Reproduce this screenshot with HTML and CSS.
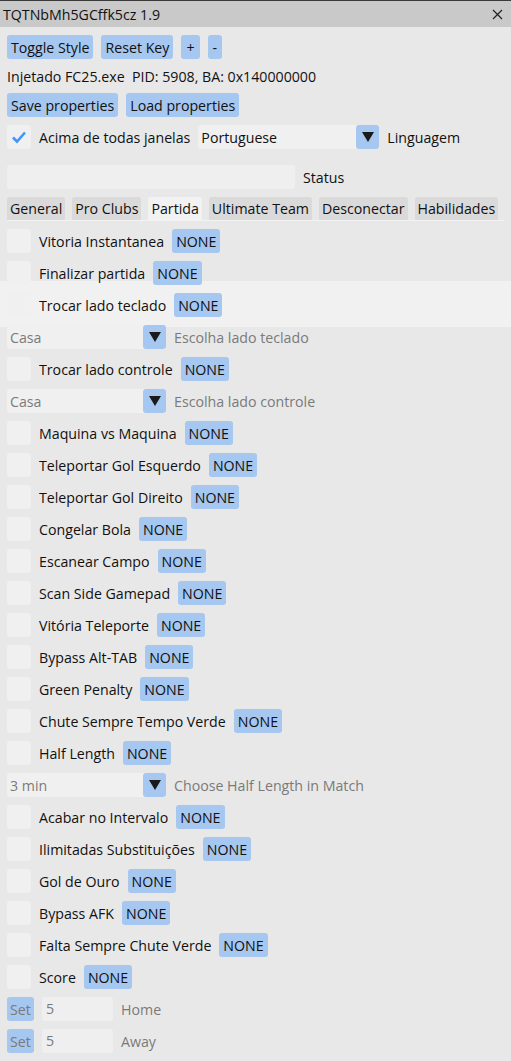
FILE: index.html
```html
<!DOCTYPE html>
<html lang="pt">
<head>
  <meta charset="UTF-8" />
  <title>TQTNbMh5GCffk5cz 1.9</title>
  <link rel="stylesheet" href="styles.css">
</head>
<body>
  <div class="window">
    <div class="titlebar">
      <span>TQTNbMh5GCffk5cz 1.9</span>
      <svg class="close" width="11" height="11" viewBox="0 0 11 11"><path d="M1 1 L10 10 M10 1 L1 10" stroke="#222" stroke-width="1.2" fill="none"/></svg>
    </div>

    <div class="content">
      <div class="row">
        <button>Toggle Style</button>
        <button>Reset Key</button>
        <button class="small">+</button>
        <button class="small">-</button>
      </div>
      <div class="row text">Injetado FC25.exe&nbsp; PID: 5908, BA: 0x140000000</div>
      <div class="row">
        <button>Save properties</button>
        <button>Load properties</button>
      </div>
      <div class="row">
        <span class="check"><svg width="24" height="24" viewBox="0 0 24 24"><path d="M6 12.5 L10 16.5 L18 7.5" stroke="#4296fa" stroke-width="2.6" fill="none" stroke-linejoin="miter"/></svg></span>
        <span>Acima de todas janelas</span>
        <div class="combo lang"><span>Portuguese</span><span class="arrow"><svg width="12" height="10" viewBox="0 0 12 10"><path d="M0 0 H12 L6 10 Z" fill="#1a1a1a"/></svg></span></div>
        <span>Linguagem</span>
      </div>
      <div class="row gap-top">
        <div class="input status-box"></div>
        <span>Status</span>
      </div>

      <div class="tabs">
        <span class="tab">General</span>
        <span class="tab">Pro Clubs</span>
        <span class="tab active">Partida</span>
        <span class="tab">Ultimate Team</span>
        <span class="tab">Desconectar</span>
        <span class="tab">Habilidades</span>
      </div>

      <div class="list">
        <div class="ghost"></div>
        <div class="row"><span class="check"></span><span>Vitoria Instantanea</span><button>NONE</button></div>
        <div class="row"><span class="check"></span><span>Finalizar partida</span><button>NONE</button></div>
        <div class="row"><span class="check"></span><span>Trocar lado teclado</span><button>NONE</button></div>
        <div class="row">
          <div class="combo"><span class="muted">Casa</span><span class="arrow"><svg width="12" height="10" viewBox="0 0 12 10"><path d="M0 0 H12 L6 10 Z" fill="#1a1a1a"/></svg></span></div>
          <span class="muted">Escolha lado teclado</span>
        </div>
        <div class="row"><span class="check"></span><span>Trocar lado controle</span><button>NONE</button></div>
        <div class="row">
          <div class="combo"><span class="muted">Casa</span><span class="arrow"><svg width="12" height="10" viewBox="0 0 12 10"><path d="M0 0 H12 L6 10 Z" fill="#1a1a1a"/></svg></span></div>
          <span class="muted">Escolha lado controle</span>
        </div>
        <div class="row"><span class="check"></span><span>Maquina vs Maquina</span><button>NONE</button></div>
        <div class="row"><span class="check"></span><span>Teleportar Gol Esquerdo</span><button>NONE</button></div>
        <div class="row"><span class="check"></span><span>Teleportar Gol Direito</span><button>NONE</button></div>
        <div class="row"><span class="check"></span><span>Congelar Bola</span><button>NONE</button></div>
        <div class="row"><span class="check"></span><span>Escanear Campo</span><button>NONE</button></div>
        <div class="row"><span class="check"></span><span>Scan Side Gamepad</span><button>NONE</button></div>
        <div class="row"><span class="check"></span><span>Vitória Teleporte</span><button>NONE</button></div>
        <div class="row"><span class="check"></span><span>Bypass Alt-TAB</span><button>NONE</button></div>
        <div class="row"><span class="check"></span><span>Green Penalty</span><button>NONE</button></div>
        <div class="row"><span class="check"></span><span>Chute Sempre Tempo Verde</span><button>NONE</button></div>
        <div class="row"><span class="check"></span><span>Half Length</span><button>NONE</button></div>
        <div class="row">
          <div class="combo"><span class="muted">3 min</span><span class="arrow"><svg width="12" height="10" viewBox="0 0 12 10"><path d="M0 0 H12 L6 10 Z" fill="#1a1a1a"/></svg></span></div>
          <span class="muted">Choose Half Length in Match</span>
        </div>
        <div class="row"><span class="check"></span><span>Acabar no Intervalo</span><button>NONE</button></div>
        <div class="row"><span class="check"></span><span>Ilimitadas Substituições</span><button>NONE</button></div>
        <div class="row"><span class="check"></span><span>Gol de Ouro</span><button>NONE</button></div>
        <div class="row"><span class="check"></span><span>Bypass AFK</span><button>NONE</button></div>
        <div class="row"><span class="check"></span><span>Falta Sempre Chute Verde</span><button>NONE</button></div>
        <div class="row"><span class="check"></span><span>Score</span><button>NONE</button></div>
        <div class="row"><button class="set">Set</button><div class="input num">5</div><span class="muted">Home</span></div>
        <div class="row"><button class="set">Set</button><div class="input num">5</div><span class="muted">Away</span></div>
      </div>
    </div>
  </div>
</body>
</html>
```

FILE: styles.css
```css
* {
  box-sizing: border-box;
}

body {
  margin: 0;
  background: #e8e8e8;
  font-family: 'Open Sans', 'Noto Sans', sans-serif;
  font-size: 14.2px;
  color: #111;
}

.window {
  width: 511px;
  height: 1061px;
  background: #e8e8e8;
  border-top: 1px solid #3a3a3a;
  overflow: hidden;
}

.titlebar {
  height: 26px;
  background: #c9c9c9;
  display: flex;
  align-items: center;
  justify-content: space-between;
  padding: 0 8px 0 3px;
}

.close {
  display: block;
}

.content {
  padding: 8px 7px;
  display: flex;
  flex-direction: column;
  gap: 8px;
}

.row {
  display: flex;
  align-items: center;
  gap: 8px;
  height: 24px;
  white-space: nowrap;
}

.row.text {
  height: 18px;
}

.row.gap-top {
  margin-top: 8px;
}

button {
  font: inherit;
  color: #111;
  height: 24px;
  padding: 0 4px;
  border: none;
  border-radius: 3px;
  background: #a6c7ef;
  cursor: pointer;
}

button.small {
  padding: 0 5px;
}

button.set {
  color: #7a7a7a;
  padding: 0 3px;
  width: 27px;
}

.check {
  width: 24px;
  height: 24px;
  flex: none;
  border-radius: 3px;
  background: #f0f0f0;
}

.check svg {
  display: block;
}

.combo {
  display: flex;
  height: 24px;
  width: 159px;
  background: #f0f0f0;
  border-radius: 3px;
  align-items: center;
  justify-content: space-between;
  padding-left: 3px;
}

.combo.lang {
  width: 181px;
}

.arrow {
  width: 23px;
  height: 24px;
  background: #a6c7ef;
  border-radius: 3px;
  display: flex;
  align-items: center;
  justify-content: center;
}

.arrow svg {
  display: block;
}

.input {
  height: 24px;
  background: #efefef;
  border-radius: 3px;
}

.status-box {
  width: 288px;
}

.input.num {
  width: 71px;
  padding-left: 4px;
  line-height: 24px;
  color: #7a7a7a;
}

.muted {
  color: #7a7a7a;
}

.tabs {
  display: flex;
  gap: 7px;
  height: 24px;
  border-bottom: 1px solid #f2f2f2;
}

.tab {
  height: 23px;
  padding: 0 3px;
  line-height: 23px;
  background: #dadada;
  border-radius: 3px 3px 0 0;
}

.tab.active {
  background: #f2f2f2;
}

.list {
  position: relative;
  display: flex;
  flex-direction: column;
  gap: 8px;
}

.list .row {
  position: relative;
}

.ghost {
  position: absolute;
  left: -7px;
  right: -7px;
  top: 52px;
  height: 46px;
  background: #f1f1f1;
}
```
